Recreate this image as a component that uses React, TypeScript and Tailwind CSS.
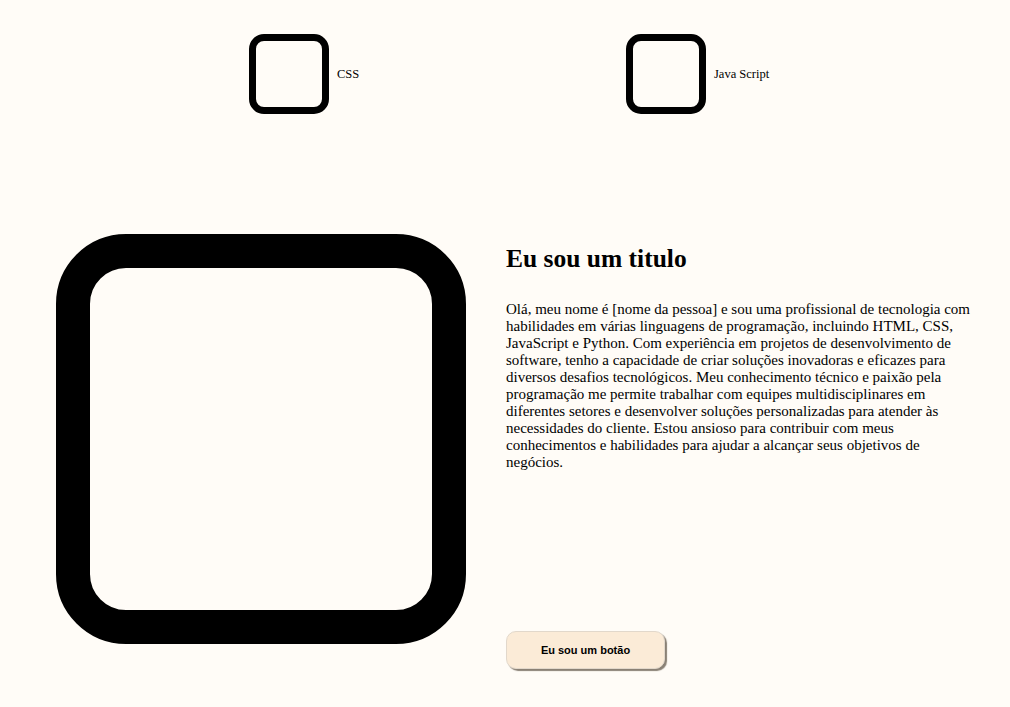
export default function App() {
    return (
        <div className="min-h-[707px] w-full bg-[#fffcf7] text-black font-['Liberation_Serif',serif]">
            <div className="flex items-center pt-[34px] pl-[249px]">
                <div className="flex items-center gap-2 w-[377px]">
                    <div className="w-[80px] h-[80px] rounded-[15px] border-[7px] border-black" />
                    <span className="text-[12.5px]">CSS</span>
                </div>
                <div className="flex items-center gap-2">
                    <div className="w-[80px] h-[80px] rounded-[15px] border-[7px] border-black" />
                    <span className="text-[12.5px]">Java Script</span>
                </div>
            </div>

            <div className="flex items-start gap-10 pl-[56px] mt-[120px]">
                <div className="w-[410px] h-[410px] shrink-0 rounded-[70px] border-[34px] border-black" />
                <div className="w-[470px] pt-[6px]">
                    <h2 className="text-[25.5px] font-bold leading-normal">Eu sou um titulo</h2>
                    <p className="mt-[23px] text-[15px] leading-[17px]">
                        Olá, meu nome é [nome da pessoa] e sou uma profissional de tecnologia com
                        habilidades em várias linguagens de programação, incluindo HTML, CSS,
                        JavaScript e Python. Com experiência em projetos de desenvolvimento de
                        software, tenho a capacidade de criar soluções inovadoras e eficazes para
                        diversos desafios tecnológicos. Meu conhecimento técnico e paixão pela
                        programação me permite trabalhar com equipes multidisciplinares em
                        diferentes setores e desenvolver soluções personalizadas para atender às
                        necessidades do cliente. Estou ansioso para contribuir com meus
                        conhecimentos e habilidades para ajudar a alcançar seus objetivos de
                        negócios.
                    </p>
                    <button
                        type="button"
                        className="mt-[160px] w-[159px] h-[38px] rounded-[10px] bg-[#fbebd7] border border-[#e2d8cb] shadow-[2px_2px_1px_0_#8a8175] font-['Liberation_Sans',Arial,sans-serif] font-bold text-[11px]"
                    >
                        Eu sou um botão
                    </button>
                </div>
            </div>
        </div>
    );
}
